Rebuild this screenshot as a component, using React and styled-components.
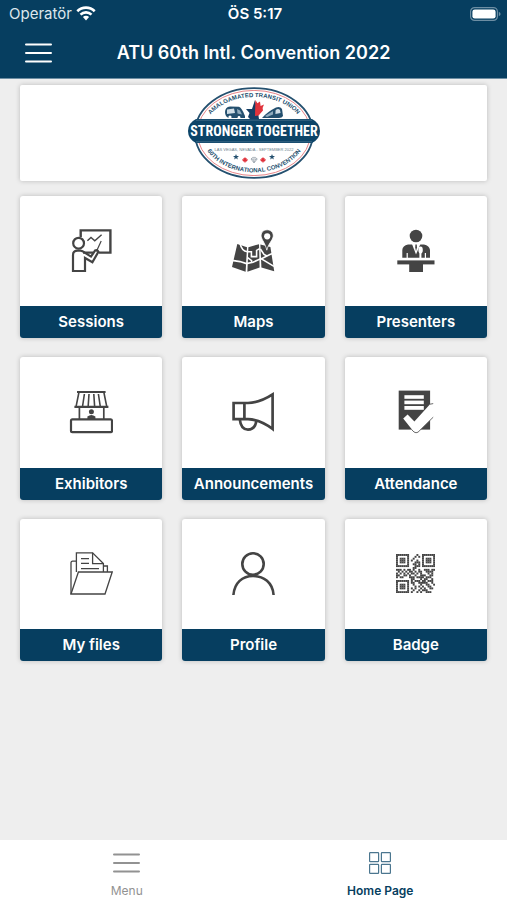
import styled, { createGlobalStyle } from "styled-components";

const GlobalStyle = createGlobalStyle`
    * {
        box-sizing: border-box;
    }
    body {
        margin: 0;
        background-color: #eeeeee;
        font-family: Inter, "Liberation Sans", sans-serif;
    }
    button {
        border: none;
        background: none;
        padding: 0;
        font-family: inherit;
        cursor: pointer;
    }
    svg {
        display: block;
    }
`;

const HomePageContainer = styled.div`
    display: flex;
    flex-direction: column;
    min-height: 100vh;
`;

const Header = styled.header`
    background-color: #063e60;
    color: #ffffff;
    border-bottom: 1px solid #6d8ea3;
`;

const StatusBar = styled.div`
    display: grid;
    grid-template-columns: 1fr auto 1fr;
    align-items: center;
    height: 27px;
    padding: 0 6px 0 9px;
`;

const Carrier = styled.div`
    display: flex;
    align-items: center;
    gap: 4px;
    font-size: 15px;
    color: #dde6ec;
`;

const Clock = styled.div`
    font-size: 15px;
    font-weight: 600;
`;

const Battery = styled.div`
    display: flex;
    justify-content: flex-end;
`;

const NavBar = styled.div`
    display: grid;
    grid-template-columns: 52px 1fr 52px;
    align-items: center;
    height: 51px;
`;

const MenuButton = styled.button`
    display: flex;
    justify-content: flex-end;
    color: #ffffff;
`;

const Title = styled.h1`
    margin: 0;
    font-size: 18px;
    font-weight: 600;
    text-align: center;
`;

const Content = styled.main`
    flex: 1;
    padding: 6px 20px 20px;
`;

const Banner = styled.div`
    display: flex;
    justify-content: center;
    align-items: center;
    height: 96px;
    margin-bottom: 15px;
    background-color: #ffffff;
    border-radius: 2px;
    box-shadow: 0 0 5px rgba(0, 0, 0, 0.22);
`;

const TileGrid = styled.div`
    display: grid;
    grid-template-columns: repeat(3, 1fr);
    gap: 19px 20px;
`;

const Tile = styled.button`
    display: flex;
    flex-direction: column;
    aspect-ratio: 1;
    overflow: hidden;
    background-color: #ffffff;
    border-radius: 3px;
    box-shadow: 0 0 5px rgba(0, 0, 0, 0.22);
`;

const TileIcon = styled.span`
    flex: 1;
    width: 100%;
    display: flex;
    justify-content: center;
    align-items: center;
    color: #444444;
`;

const TileLabel = styled.span`
    width: 100%;
    background-color: #063e60;
    color: #ffffff;
    font-size: 15px;
    font-weight: 600;
    line-height: 32px;
    text-align: center;
`;

const TabBar = styled.nav`
    display: flex;
    height: 60px;
    background-color: #ffffff;
`;

const Tab = styled.button`
    flex: 1;
    display: flex;
    flex-direction: column;
    align-items: center;
    gap: 8px;
    padding-top: 11px;
    color: ${(props) => (props.$active ? "#063e60" : "#929292")};
    font-size: 12px;
    font-weight: ${(props) => (props.$active ? 600 : 400)};
    line-height: 16px;
`;

const LogoBandText = styled.text`
    font-family: "Roboto Condensed", "Open Sans Condensed", "Liberation Sans Narrow", "Liberation Sans", sans-serif;
    font-size: 14px;
    font-weight: 700;
    fill: #ffffff;
`;

const LogoArcText = styled.text`
    font-family: "Liberation Sans", sans-serif;
    font-size: 6px;
    font-weight: 700;
    fill: #24506f;
`;

const LogoSmallText = styled.text`
    font-family: "Liberation Sans", sans-serif;
    font-size: 4px;
    fill: #6b7f8c;
`;

function BarsIcon() {
    return (
        <svg width="27" height="24" viewBox="0 0 27 24" stroke="currentColor" strokeWidth="2" strokeLinecap="round">
            <path d="M1 3.4H26M1 12H26M1 20.6H26" />
        </svg>
    );
}

function GridIcon() {
    return (
        <svg width="24" height="24" viewBox="0 0 24 24" fill="none" stroke="#4b768f" strokeWidth="1.2">
            <rect x="1.6" y="1.6" width="9" height="9" rx="0.6" />
            <rect x="13.4" y="1.6" width="9" height="9" rx="0.6" />
            <rect x="1.6" y="13.4" width="9" height="9" rx="0.6" />
            <rect x="13.4" y="13.4" width="9" height="9" rx="0.6" />
        </svg>
    );
}

function WifiIcon() {
    return (
        <svg width="20" height="16" viewBox="0 0 20 16" fill="none" stroke="#ffffff" strokeWidth="2.6">
            <path d="M1.3 5.2A12.4 12.4 0 0 1 18.7 5.2" />
            <path d="M4.5 8.6A7.8 7.8 0 0 1 15.5 8.6" />
            <path d="M6.9 11.1A4.4 4.4 0 0 1 13.1 11.1L10 14.4Z" fill="#ffffff" stroke="none" />
        </svg>
    );
}

function BatteryIcon() {
    return (
        <svg width="31" height="14" viewBox="0 0 31 14">
            <rect x="0.6" y="0.6" width="26.8" height="12.8" rx="4" fill="none" stroke="#6d8ea3" strokeWidth="1.2" />
            <rect x="2.4" y="2.4" width="23.2" height="9.2" rx="2.4" fill="#ffffff" />
            <path d="M28.8 4.8Q30.6 5.6 30.6 7T28.8 9.2Z" fill="#6d8ea3" />
        </svg>
    );
}

function ConventionLogo() {
    const star = "M0 -3L0.8 -0.9L3 -0.9L1.2 0.4L1.9 2.6L0 1.3L-1.9 2.6L-1.2 0.4L-3 -0.9L-0.8 -0.9Z";
    const leaf = "M0 -3L0.8 -1.7L1.7 -2L1.5 -0.5L3 -0.8L2.5 0.5L1.2 1.8L0.3 1.8V3H-0.3V1.8L-1.2 1.8L-2.5 0.5L-3 -0.8L-1.5 -0.5L-1.7 -2L-0.8 -1.7Z";
    return (
        <svg width="132" height="92" viewBox="0 0 132 92" role="img" aria-label="Stronger Together">
            <defs>
                <path id="arc-top" d="M18.4 34A50.5 36 0 0 1 113.6 34" />
                <path id="arc-bottom" d="M17 60A52.5 39.5 0 0 0 115 60" />
            </defs>
            <ellipse cx="66" cy="46" rx="59" ry="44.8" fill="#ffffff" stroke="#24506f" strokeWidth="1.8" />
            <ellipse cx="66" cy="46" rx="56.6" ry="42.6" fill="none" stroke="#e4767a" strokeWidth="0.9" />
            <LogoArcText textAnchor="middle">
                <textPath href="#arc-top" startOffset="50%">AMALGAMATED TRANSIT UNION</textPath>
            </LogoArcText>
            {/* bus on the left, train on the right */}
            <path d="M37 25Q37 20 42 19.4L51 19.8Q54 21 57 29V31H41Q37 30 37 25Z" fill="#24506f" />
            <path d="M39 22.5L46 21.6L47 26L39 27Z" fill="#cfdde6" />
            <path d="M49 22L52 23.5L54 27.5L49.5 26.5Z" fill="#8fabbd" />
            <circle cx="42" cy="30" r="1.6" fill="#ffffff" />
            <circle cx="51" cy="30.4" r="1.4" fill="#ffffff" />
            <path d="M74 31Q79 25 88 20.5Q92 19 94 22L95 29Q94 31 91 31Z" fill="#24506f" />
            <path d="M87.6 23.2Q90 20.8 92 23L92.6 26L87.4 27Z" fill="#cfdde6" />
            <path d="M77 29L85 24V27.4L79 30Z" fill="#8fabbd" />
            <path d="M67 13L69 21.5H74L70 26L71 32H62L60 30L61.5 26L58 22H64Z" fill="#153f66" />
            <path d="M67.4 13L69.4 16.2L72 14.6L72.6 19L76 17.6L74.6 21L75 23.4L70.6 28.6L67 29Z" fill="#e0333c" />
            <path d="M8 32H124Q132 36 132 44T124 56H8Q0 52 0 44T8 32Z" fill="#0c4468" />
            <path d="M8 33.2H124M8 54.8H124" stroke="#5d8099" strokeWidth="0.6" />
            <LogoBandText x="66" y="49" textAnchor="middle">STRONGER TOGETHER</LogoBandText>
            <LogoSmallText x="66" y="64" textAnchor="middle">LAS VEGAS, NEVADA - SEPTEMBER 2022</LogoSmallText>
            <path d={star} transform="translate(48 70)" fill="#24506f" />
            <path d={leaf} transform="translate(57 73)" fill="#e0333c" />
            <path d="M63 72L64.6 70.4H67.6L69.2 72L66 76ZM63 72H69.2M64.8 72L66 75.4L67.6 72" fill="none" stroke="#8c9aa4" strokeWidth="0.7" />
            <path d={leaf} transform="translate(75 73)" fill="#e0333c" />
            <path d={star} transform="translate(84 70)" fill="#24506f" />
            <LogoArcText textAnchor="middle">
                <textPath href="#arc-bottom" startOffset="50%">60TH INTERNATIONAL CONVENTION</textPath>
            </LogoArcText>
        </svg>
    );
}

function IconFrame({ children, strokeWidth = 2.2 }) {
    return (
        <svg width="44" height="44" viewBox="0 0 44 44" fill="none" stroke="currentColor" strokeWidth={strokeWidth}>
            {children}
        </svg>
    );
}

function SessionsIcon() {
    return (
        <IconFrame>
            <path d="M11.7 8V1.4H41.4V23.6H30M14 23.6H24" strokeWidth="2.4" />
            <circle cx="9.6" cy="14.2" r="5.4" />
            <path d="M4 42V26Q4 21.6 8.6 21.6H11.5Q13.6 21.8 15.4 23.4L22 27.6L26 21.6Q28.4 20.4 29.4 22.8L23.4 33.2L16 29V42Z" />
            <path d="M27.4 22.6L32.2 12" strokeWidth="1.2" />
            <path d="M18.4 11.8L22 8.4L25.8 11.8L32.6 5.8" strokeWidth="1.4" />
        </IconFrame>
    );
}

function MapsIcon() {
    return (
        <IconFrame>
            <g fill="currentColor" stroke="none">
                <path d="M6.3 15L16 18.2L14.6 42.7L1 38Z" />
                <path d="M17.4 18.2L28 15.2L28.6 38.6L16.4 42.7Z" />
                <path d="M29.4 15.4L39.4 18L43.2 42.2L30.4 38.4Z" />
            </g>
            <g stroke="#ffffff" strokeWidth="1.6">
                <path d="M1 31.4L9 32.6L15.4 34.6L22 33.2L30 29.6L43 37.4" />
                <path d="M9 14.4Q10.6 22 16.4 22.8H20.4V27.6H25.6V21.4L28.6 19.6" />
                <path d="M30 30L39.4 25.2L42 24.4" />
                <path d="M16.6 28.6L20.6 31.6V34" />
                <path d="M29.4 20L33 25.4L36 27" />
            </g>
            <path d="M36.2 0.8C32 0.8 29.6 4 30.2 7.6C30.8 11 34.4 14.6 35.8 21.2C37.4 14.6 41.6 11.4 42.2 7.6C42.8 4 40.2 0.8 36.2 0.8Z" fill="currentColor" stroke="#ffffff" strokeWidth="0.8" />
            <circle cx="36.2" cy="7.3" r="3.1" fill="#ffffff" stroke="none" />
        </IconFrame>
    );
}

function PresentersIcon() {
    return (
        <IconFrame>
            <g fill="currentColor" stroke="none">
                <circle cx="22" cy="7" r="6.3" />
                <path d="M8.3 28.8V21Q8.6 16.4 14 15.4H30Q35.4 16.4 36 21V28.8Z" />
                <rect x="3.3" y="31.4" width="37.2" height="4" />
                <rect x="15.2" y="35" width="13.8" height="8" />
            </g>
            <g fill="#ffffff" stroke="none">
                <path d="M18 15L22 25.4L26.4 15Z" />
                <ellipse cx="26.6" cy="21" rx="2.2" ry="3.4" />
                <rect x="25.4" y="22" width="2" height="7" />
                <rect x="12.6" y="24" width="1.2" height="5" />
                <rect x="30.8" y="24" width="1.2" height="5" />
            </g>
            <path d="M21.4 15.4H22.8L23 18.6L22 22L21.2 18.6Z" fill="currentColor" stroke="none" />
        </IconFrame>
    );
}

function ExhibitorsIcon() {
    return (
        <IconFrame>
            <path d="M8 2H36.6M5.4 16.8H39.4" />
            <path d="M10 2L7 16.8M15.4 4L13.6 16M20 4L19.2 16M24.8 4L25.6 16M29.4 4L31.2 16M34.8 2L37.8 16.8" strokeWidth="1.6" />
            <path d="M10.4 17V29.4M34.8 17V29.4" strokeWidth="1.7" />
            <rect x="2" y="29.4" width="41" height="12.8" rx="1.4" />
            <circle cx="22.4" cy="21.8" r="2.5" fill="currentColor" stroke="none" />
            <path d="M18.4 29V26.4Q22.4 23.4 26.4 26.4V29Z" fill="currentColor" stroke="none" />
        </IconFrame>
    );
}

function AnnouncementsIcon() {
    return (
        <IconFrame strokeWidth={2.7}>
            <path d="M2.6 13H17Q29 12.6 41.6 4.4V39Q29 29.6 17 29.2H2.6Z" />
            <path d="M13.4 13V29.2" />
            <path d="M8.8 29.4Q9.8 39.6 17 39.6T25.4 30.6" />
        </IconFrame>
    );
}

function AttendanceIcon() {
    return (
        <IconFrame>
            <rect x="4.7" y="0.6" width="31.4" height="39" fill="currentColor" stroke="none" />
            <g fill="#ffffff" stroke="none">
                <rect x="10.4" y="5.2" width="19.4" height="3.6" />
                <rect x="10.4" y="10.6" width="19.4" height="3.6" />
                <rect x="10.4" y="16" width="19.4" height="3.8" />
            </g>
            <path d="M9.2 28.6L13.6 24.6L20.4 31.6L36 14.2L39.2 13.6V27.2L24 42.2Q22 43.4 20 42Z" fill="#ffffff" stroke="none" />
            <path d="M36 14.2L39.2 13.6M39.2 27.2L24 42.2Q22 43.4 20 42L17.6 39.6" strokeWidth="0.8" />
        </IconFrame>
    );
}

function FilesIcon() {
    return (
        <IconFrame strokeWidth={1.3}>
            <path d="M7.4 20V0.8H23.6L34.4 11.6V20" />
            <path d="M23.6 0.8V11.6H34.4" />
            <path d="M7.4 9.2H3.6Q2 9.2 2 10.8V42" />
            <path d="M34.4 14H38.4V20" />
            <path d="M2 42L9.4 20H43.2L36 42Z" />
            <path d="M12 6.6H20M12 11.4H20M12 16.6H30" />
        </IconFrame>
    );
}

function ProfileIcon() {
    return (
        <IconFrame strokeWidth={2.6}>
            <circle cx="22" cy="12" r="10.7" />
            <path d="M2.4 43C3.4 30.6 11.4 24 22 24S41.8 30.6 42.6 43" />
        </IconFrame>
    );
}

const badgeModules = [
    "111111100001001111111",
    "100000100010101000001",
    "101110100100001011101",
    "101110101001001011101",
    "101110100011101011101",
    "100000100110101000001",
    "111111100011101111111",
    "000000000110000000000",
    "111010110100100111011",
    "010101011010110011110",
    "101010101101010001010",
    "110011010010011100110",
    "101100011101111011100",
    "000000001100010110010",
    "111111101011101101110",
    "100000101100111110010",
    "101110100100010011001",
    "101110100010101001100",
    "101110101010010100110",
    "100000100100101110000",
    "111111101001010011100",
];

function BadgeIcon() {
    return (
        <svg width="39" height="39" viewBox="0 0 21 21" fill="currentColor">
            {badgeModules.map((row, y) =>
                row.split("").map((cell, x) =>
                    cell === "1" ? <rect key={x + "-" + y} x={x} y={y} width="1.04" height="1.04" /> : null
                )
            )}
        </svg>
    );
}

const tiles = [
    { label: "Sessions", Icon: SessionsIcon },
    { label: "Maps", Icon: MapsIcon },
    { label: "Presenters", Icon: PresentersIcon },
    { label: "Exhibitors", Icon: ExhibitorsIcon },
    { label: "Announcements", Icon: AnnouncementsIcon },
    { label: "Attendance", Icon: AttendanceIcon },
    { label: "My files", Icon: FilesIcon },
    { label: "Profile", Icon: ProfileIcon },
    { label: "Badge", Icon: BadgeIcon },
];

export default function App() {
    return (
        <HomePageContainer>
            <GlobalStyle />
            <Header>
                <StatusBar>
                    <Carrier>Operatör <WifiIcon /></Carrier>
                    <Clock>ÖS 5:17</Clock>
                    <Battery><BatteryIcon /></Battery>
                </StatusBar>
                <NavBar>
                    <MenuButton aria-label="Open menu"><BarsIcon /></MenuButton>
                    <Title>ATU 60th Intl. Convention 2022</Title>
                </NavBar>
            </Header>

            <Content>
                <Banner>
                    <ConventionLogo />
                </Banner>
                <TileGrid>
                    {tiles.map(({ label, Icon }) => (
                        <Tile key={label}>
                            <TileIcon><Icon /></TileIcon>
                            <TileLabel>{label}</TileLabel>
                        </Tile>
                    ))}
                </TileGrid>
            </Content>

            <TabBar>
                <Tab><BarsIcon />Menu</Tab>
                <Tab $active><GridIcon />Home Page</Tab>
            </TabBar>
        </HomePageContainer>
    );
}
